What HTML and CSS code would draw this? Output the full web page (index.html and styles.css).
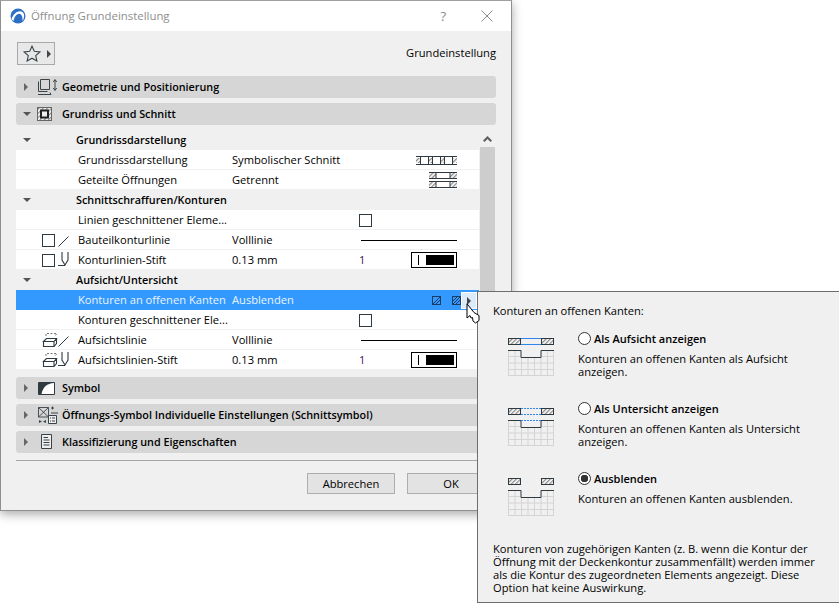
FILE: index.html
```html
<!DOCTYPE html>
<html lang="de">
<head>
<meta charset="utf-8">
<title>Öffnung Grundeinstellung</title>
<link rel="stylesheet" href="styles.css">
</head>
<body>
<svg class="defs" width="0" height="0">
  <defs>
    <pattern id="hatch" width="3" height="3" patternUnits="userSpaceOnUse" patternTransform="rotate(45)">
      <rect width="3" height="3" fill="#fff"/><rect width="1.3" height="3" fill="#8a8a8a"/>
    </pattern>
    <symbol id="grid" viewBox="0 0 46 26">
      <path d="M.5 0V26M7 0V26M13.5 0V26M20 0V26M26.5 0V26M33 0V26M39.5 0V26M45.5 0V26M0 6.5H46M0 13H46M0 19.5H46M0 25.5H46" stroke="#d4d4d4" fill="none"/>
    </symbol>
    <symbol id="pen" viewBox="0 0 14 20">
      <path d="M4 2V10L7 15 10 10V2M0 15.500H7" fill="none" stroke="#2f3a40" stroke-width="1.100"/>
    </symbol>
    <symbol id="slash" viewBox="0 0 11 11">
      <path d="M.5 10.500L10.500 .5" stroke="#2f3a40" fill="none"/>
    </symbol>
    <symbol id="box3d" viewBox="0 0 16 16">
      <path d="M4 4V1.500H15L13 4" fill="none" stroke="#777" stroke-dasharray="2 1.500"/>
      <path d="M1.500 9.500L4.500 6.500H14.500L12 9.500ZM1.500 9.500V14.500H12V9.500M12 14.500L14.500 11.500V6.500" fill="#fff" stroke="#2f3a40" stroke-width="1.100"/>
    </symbol>
    <symbol id="penbar" viewBox="0 0 46 16">
      <rect x=".5" y=".5" width="45" height="15" fill="#fff" stroke="#000"/>
      <rect x="7" y="3" width="1" height="10" fill="#000"/>
      <rect x="15" y="3" width="28" height="10" fill="#000"/>
    </symbol>
  </defs>
</svg>

<main class="dialog">
  <header class="titlebar">
    <svg class="logo" width="16" height="16" viewBox="0 0 16 16"><circle cx="8" cy="8" r="7.500" fill="#2d6fc4"/><path d="M1.500 11C4 4 10 1.500 13 4.500 15 7 14 11 12.500 13 13 8 11 5 8 6 5.500 7 4 10 3.500 13Z" fill="#fff"/></svg>
    <span class="title">Öffnung Grundeinstellung</span>
    <span class="help">?</span>
    <svg class="close" width="12" height="12" viewBox="0 0 12 12"><path d="M.5.5L11.500 11.500M11.500.5L.5 11.500" stroke="#8a8a8a" fill="none"/></svg>
  </header>

  <div class="body">
    <div class="favbar">
      <button class="favbtn" type="button">
        <svg width="18" height="17" viewBox="0 0 18 17"><path d="M9 1.200L11.300 6.300 16.900 6.900 12.700 10.600 13.900 16 9 13.200 4.100 16 5.300 10.600 1.100 6.900 6.700 6.300Z" fill="none" stroke="#3a4348" stroke-width="1.100"/></svg>
        <i class="tri-r dark"></i>
      </button>
      <span class="favname">Grundeinstellung</span>
    </div>

    <div class="bar">
      <i class="tri-r"></i>
      <svg class="baricon" width="22" height="18" viewBox="0 0 22 18"><path d="M3.500 1.500H12.500V11.500H3.500ZM1.500 3.500V13.500H10.500M1 16.500H14L13 14.500" fill="none" stroke="#3a4348"/><path d="M18 2V12M16.300 4L18 1.500 19.700 4M16.300 10L18 12.500 19.700 10" fill="none" stroke="#3a4348"/></svg>
      <span>Geometrie und Positionierung</span>
    </div>
    <div class="bar">
      <i class="tri-d"></i>
      <svg class="baricon" width="22" height="18" viewBox="0 0 22 18"><rect x=".5" y="2.500" width="14" height="13" fill="url(#hatch)" stroke="#666"/><rect x="4" y="5.500" width="7" height="7" fill="#eee" stroke="#222" stroke-width="2"/></svg>
      <span>Grundriss und Schnitt</span>
    </div>

    <div class="table">
      <div class="rows">
        <div class="row group"><i class="tri-d"></i><b>Grundrissdarstellung</b></div>
        <div class="row"><span></span><span>Grundrissdarstellung</span><span>Symbolischer Schnitt</span><span></span>
          <svg class="prev" width="41" height="9" viewBox="0 0 41 9"><path d="M0 2H4.500V7H0ZM12.500 2H16.500V7H12.500ZM24.500 2H28.500V7H24.500ZM36.500 2H41V7H36.500Z" fill="url(#hatch)"/><path d="M0 .5H41M0 8.500H41M4.500 0V9M12.500 0V9M16.500 0V9M24.500 0V9M28.500 0V9M36.500 0V9" stroke="#2f3a40" fill="none"/></svg>
        </div>
        <div class="row"><span></span><span>Geteilte Öffnungen</span><span>Getrennt</span><span></span>
          <svg class="prev" width="41" height="16" viewBox="0 0 41 16"><path d="M13 1H20V6H13ZM34 1H41V6H34ZM13 10H20V15H13ZM34 10H41V15H34Z" fill="url(#hatch)"/><path d="M13 .5H41M13 6.500H41M20 .5V6.500M34 .5V6.500M13 9.500H41M13 15.500H41M20 9.500V15.500M34 9.500V15.500" stroke="#2f3a40" fill="none"/></svg>
        </div>
        <div class="row group"><i class="tri-d"></i><b>Schnittschraffuren/Konturen</b></div>
        <div class="row"><span></span><span>Linien geschnittener Eleme...</span><span></span><i class="check"></i></div>
        <div class="row">
          <span class="rowicons"><i class="check"></i><svg class="slash" width="11" height="11"><use href="#slash"/></svg></span>
          <span>Bauteilkonturlinie</span><span>Volllinie</span><i class="line"></i>
        </div>
        <div class="row">
          <span class="rowicons"><i class="check"></i><svg width="14" height="20"><use href="#pen"/></svg></span>
          <span>Konturlinien-Stift</span><span>0.13 mm</span><span class="num">1</span>
          <svg class="prev" width="46" height="16"><use href="#penbar"/></svg>
        </div>
        <div class="row group"><i class="tri-d"></i><b>Aufsicht/Untersicht</b></div>
        <div class="row selected"><span></span><span>Konturen an offenen Kanten</span><span>Ausblenden</span><span></span>
          <span class="selicons">
            <svg width="9" height="9" viewBox="0 0 9 9"><rect x=".5" y=".5" width="8" height="8" fill="none" stroke="#1c3d63"/><path d="M1 8L8 1M4 8L8 4" stroke="#1c3d63"/></svg>
            <svg width="9" height="9" viewBox="0 0 9 9"><rect x=".5" y=".5" width="8" height="8" fill="none" stroke="#1c3d63"/><path d="M1 8L8 1M4 8L8 4M1 5L5 1" stroke="#1c3d63"/></svg>
            <span class="flyout"><i class="tri-r dark"></i></span>
          </span>
        </div>
        <div class="row"><span></span><span>Konturen geschnittener Ele...</span><span></span><i class="check"></i></div>
        <div class="row">
          <span class="rowicons boxed"><svg width="16" height="16"><use href="#box3d"/></svg><svg class="slash" width="11" height="11"><use href="#slash"/></svg></span>
          <span>Aufsichtslinie</span><span>Volllinie</span><i class="line"></i>
        </div>
        <div class="row">
          <span class="rowicons boxed"><svg width="16" height="16"><use href="#box3d"/></svg><svg width="14" height="20"><use href="#pen"/></svg></span>
          <span>Aufsichtslinien-Stift</span><span>0.13 mm</span><span class="num">1</span>
          <svg class="prev" width="46" height="16"><use href="#penbar"/></svg>
        </div>
      </div>
      <div class="scroll">
        <div class="arrow"><svg width="9" height="6" viewBox="0 0 9 6"><path d="M4.500 0L9 4.500 7.500 6 4.500 3 1.500 6 0 4.500Z" fill="#606060"/></svg></div>
        <div class="thumb"></div>
      </div>
    </div>

    <div class="bar">
      <i class="tri-r"></i>
      <svg class="baricon" width="22" height="18" viewBox="0 0 22 18"><path d="M1.500 3.500H17.500V15.500H1.500Z" fill="#fff" stroke="#2f3a40"/><path d="M2 4H17C10 4.500 6 8 4.500 15H2Z" fill="#2f3a40"/></svg>
      <span>Symbol</span>
    </div>
    <div class="bar">
      <i class="tri-r"></i>
      <svg class="baricon" width="22" height="18" viewBox="0 0 22 18"><path d="M1.500 1.500H11.500V11H1.500ZM1.500 1.500L11.500 11M11.500 1.500L1.500 11" fill="none" stroke="#3a4348" stroke-width=".9"/><path d="M14 2H17M15.500 .5V3.500M14 7H21" stroke="#3a4348"/><path d="M11.500 9.500H19.500V17.500H11.500Z" fill="#eee" stroke="#3a4348"/><path d="M13 12H14M15 12H18M13 15H14M15 15H18" stroke="#3a4348"/><path d="M2 14L5 15.500 2 17ZM9 14L6 15.500 9 17Z" fill="#3a4348"/></svg>
      <span>Öffnungs-Symbol Individuelle Einstellungen (Schnittsymbol)</span>
    </div>
    <div class="bar">
      <i class="tri-r"></i>
      <svg class="baricon" width="22" height="18" viewBox="0 0 22 18"><path d="M4.500 1.500H14.500V15.500H4.500Z" fill="#eee" stroke="#3a4348"/><path d="M6.500 4.500H11M6.500 7H12.500M6.500 9.500H12.500M6.500 12H12.500" stroke="#3a4348"/></svg>
      <span>Klassifizierung und Eigenschaften</span>
    </div>

    <footer class="foot">
      <button class="btn" type="button">Abbrechen</button>
      <button class="btn" type="button">OK</button>
    </footer>
  </div>
</main>

<aside class="pop">
  <p class="poptitle">Konturen an offenen Kanten:</p>

  <div class="opt">
    <svg class="ill" width="46" height="38" viewBox="0 0 46 38">
      <use href="#grid" x="0" y="12" width="46" height="26"/>
      <rect x=".5" y=".5" width="12" height="6" fill="url(#hatch)" stroke="#2f3a40"/><rect x="33.500" y=".5" width="12" height="6" fill="url(#hatch)" stroke="#2f3a40"/>
      <path d="M13 .5H33M13 6.500H33" stroke="#2f86f0"/>
      <path d="M0 12.500H13V19.500H33V12.500H46" fill="#f0f0f0" stroke="#2f3a40"/>
    </svg>
    <div>
      <label class="radio"><i class="rb"></i>Als Aufsicht anzeigen</label>
      <p>Konturen an offenen Kanten als Aufsicht anzeigen.</p>
    </div>
  </div>

  <div class="opt">
    <svg class="ill" width="46" height="38" viewBox="0 0 46 38">
      <use href="#grid" x="0" y="12" width="46" height="26"/>
      <rect x=".5" y=".5" width="12" height="6" fill="url(#hatch)" stroke="#2f3a40"/><rect x="33.500" y=".5" width="12" height="6" fill="url(#hatch)" stroke="#2f3a40"/>
      <path d="M0 12.500H13V19.500H33V12.500H46" fill="#f0f0f0" stroke="#2f3a40"/>
      <path d="M13 .5H33M13 6.500H33M13 12.500H33" stroke="#2f86f0" stroke-dasharray="2 1"/>
    </svg>
    <div>
      <label class="radio"><i class="rb"></i>Als Untersicht anzeigen</label>
      <p>Konturen an offenen Kanten als Untersicht anzeigen.</p>
    </div>
  </div>

  <div class="opt opt-last">
    <svg class="ill" width="46" height="38" viewBox="0 0 46 38">
      <use href="#grid" x="0" y="12" width="46" height="26"/>
      <rect x=".5" y=".5" width="12" height="6" fill="url(#hatch)" stroke="#2f3a40"/><rect x="33.500" y=".5" width="12" height="6" fill="url(#hatch)" stroke="#2f3a40"/>
      <path d="M0 12.500H13V19.500H33V12.500H46" fill="#f0f0f0" stroke="#2f3a40"/>
    </svg>
    <div>
      <label class="radio"><i class="rb on"></i>Ausblenden</label>
      <p>Konturen an offenen Kanten ausblenden.</p>
    </div>
  </div>

  <p class="popnote">Konturen von zugehörigen Kanten (z. B. wenn die Kontur der Öffnung mit der Deckenkontur zusammenfällt) werden immer als die Kontur des zugeordneten Elements angezeigt. Diese Option hat keine Auswirkung.</p>
</aside>

<svg class="cursor" width="14" height="21" viewBox="0 0 14 21"><path d="M1 .8V15L4 12.500 5 15 6.500 14.500 7 18 9.500 20 13 17.500 13 12.500 8 9.500Z" fill="#fff" stroke="#000"/></svg>
</body>
</html>
```

FILE: styles.css
```css
* { box-sizing: border-box; }
html, body { margin: 0; padding: 0; }
body {
  width: 839px;
  height: 603px;
  position: relative;
  overflow: hidden;
  background: #fff;
  font-family: "Open Sans", "Noto Sans", sans-serif;
  font-size: 11.15px;
  color: #000;
}
.defs { position: absolute; }
i { display: block; }
p { margin: 0; }

.dialog {
  position: absolute;
  left: 0;
  top: 0;
  width: 512px;
  height: 511px;
  background: #f0f0f0;
  border: 1px solid #8f8f8f;
  border-top-color: #a0a0a0;
  box-shadow: 0 3px 10px rgba(0,0,0,.35);
}
.titlebar {
  height: 30px;
  background: #fff;
  display: flex;
  align-items: center;
  padding-left: 9px;
}
.logo { margin-right: 5px; }
.title { font-size: 11.4px; color: #8e8e8e; flex: 1; padding-bottom: 1px; }
.help { font-size: 13px; color: #8a8a8a; margin-right: 35px; }
.close { margin-right: 18px; }

.body { padding: 0 15px; }
.favbar {
  height: 45px;
  padding-top: 11px;
  display: flex;
  align-items: flex-start;
  justify-content: space-between;
}
.favbtn {
  width: 38px;
  height: 23px;
  margin-left: 1px;
  padding: 0 0 0 5px;
  background: #e8e8e8;
  border: 1px solid #a9a9a9;
  display: flex;
  align-items: center;
  gap: 6px;
}
.favname { padding-top: 3px; }

.tri-r { width: 0; height: 0; flex: none; border-left: 4px solid #666; border-top: 4px solid transparent; border-bottom: 4px solid transparent; }
.tri-r.dark { border-left-color: #444; }
.tri-d { width: 0; height: 0; flex: none; border-top: 4px solid #555; border-left: 4px solid transparent; border-right: 4px solid transparent; }

.bar {
  height: 22px;
  margin-bottom: 5px;
  background: #d6d6d6;
  border-radius: 3px;
  display: flex;
  align-items: center;
  padding-left: 7px;
  font-weight: 600;
  font-size: 10.8px;
}
.bar span { padding-bottom: 1px; }
.bar .tri-r { margin-right: 6px; margin-left: 1px; }
.bar .tri-d { margin-right: 3px; }
.baricon { margin-right: 3px; margin-left: 3px; flex: none; }

.table { display: flex; height: 247px; }
.rows { width: 463px; }
.row {
  height: 20px;
  display: grid;
  grid-template-columns: 62px 154px 127px 52px 1fr;
  grid-template-rows: 18px;
  align-items: center;
  background: #fff;
  padding-top: 1px;
  border-bottom: 1px solid #f0f0f0;
  line-height: 18px;
}
.row.group {
  display: flex;
  background: #f0f0f0;
  border-bottom: 0;
  padding: 0 0 0 7px;
  font-size: 10.8px;
}
.row.group b { margin-left: 45px; font-weight: 600; }
.row.selected { background: #3399ff; color: #eaf4ff; border-bottom-color: #3399ff; }
.num { color: #4a0a5e; }
.check { width: 13px; height: 13px; background: #fff; border: 1px solid #2f3a40; }
.rowicons { display: flex; align-items: center; padding-left: 26px; gap: 3px; }
.rowicons.boxed { gap: 0; }
.rowicons .slash { margin-top: 2px; }
.line { grid-column: 4 / 6; width: 96px; height: 1px; background: #000; margin-left: 2px; }
.prev { justify-self: end; margin-right: 22px; }
.selicons { position: absolute; left: 431px; top: 291px; height: 17px; width: 46px; display: flex; align-items: center; gap: 11px; }
.flyout {
  flex: none;
  width: 16px;
  height: 17px;
  margin-left: -11px;
  background: #dcebfa;
  border: 1px solid #fff;
  display: flex;
  align-items: center;
  justify-content: center;
}

.scroll { width: 15px; margin-left: 1px; display: flex; flex-direction: column; }
.arrow { height: 17px; display: flex; align-items: center; justify-content: center; }
.thumb { flex: 1; background: #cdcdcd; }

.foot {
  margin-top: 7px;
  border-top: 1px solid #a6a6a6;
  padding-top: 12px;
  display: flex;
  gap: 12px;
  padding-left: 291px;
}
.btn {
  width: 88px;
  height: 21px;
  padding: 0;
  font: inherit;
  background: #e3e3e3;
  border: 1px solid #adadad;
}

.pop {
  position: absolute;
  left: 477px;
  top: 291px;
  width: 362px;
  height: 312px;
  background: #f0f0f0;
  border: 1px solid #6e6e6e;
  border-right: 0;
  padding: 10px 15px 0;
}
.poptitle { margin-bottom: 11px; line-height: 18px; }
.opt { display: flex; height: 70px; padding-left: 15px; }
.ill { flex: none; margin-right: 24px; margin-top: 7px; overflow: visible; }
.opt-last { height: 71px; }
.radio { display: flex; align-items: center; gap: 3px; font-weight: 600; font-size: 11px; height: 14px; }
.rb { width: 13px; height: 13px; border-radius: 50%; border: 1px solid #333; background: #fff; }
.rb.on { background: radial-gradient(circle, #333 0 3.5px, #fff 4px); }
.opt p { margin-top: 7px; line-height: 13px; width: 245px; }
.popnote { line-height: 13px; width: 330px; }

.cursor { position: absolute; left: 466px; top: 303px; }
```
